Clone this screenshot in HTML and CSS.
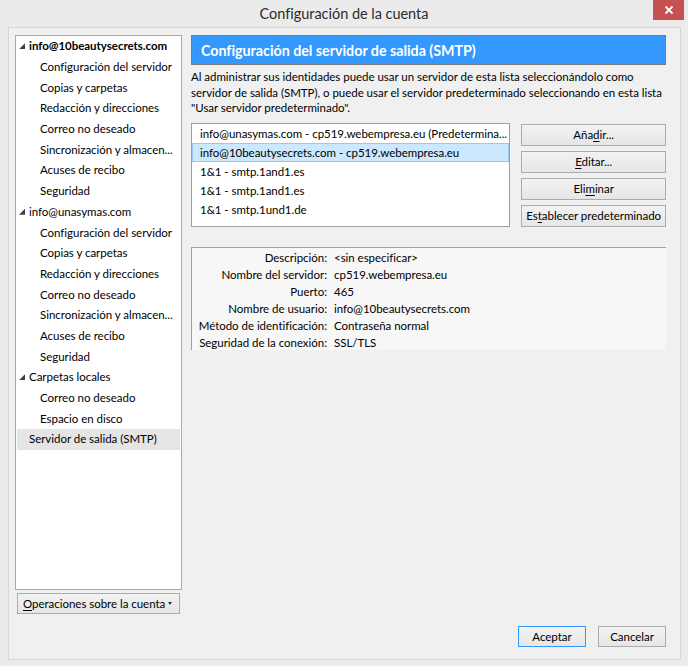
FILE: index.html
```html
<!DOCTYPE html>
<html lang="es">
<head>
<meta charset="utf-8">
<title>Configuración de la cuenta</title>
<link rel="stylesheet" href="styles.css">
</head>
<body>
<div class="window">
  <div class="titlebar">
    <span class="title">Configuración de la cuenta</span>
    <div class="close"><svg width="10" height="10" viewBox="0 0 10 10"><path d="M1.5 1.5 L8.5 8.5 M8.5 1.5 L1.5 8.5" stroke="#fff" stroke-width="1.8" fill="none"/></svg></div>
  </div>
  <div class="client">
    <div class="main">
      <div class="leftcol">
        <div class="tree">
          <div class="node top bold"><span class="twisty"></span>info@10beautysecrets.com</div>
          <div class="node child">Configuración del servidor</div>
          <div class="node child">Copias y carpetas</div>
          <div class="node child">Redacción y direcciones</div>
          <div class="node child">Correo no deseado</div>
          <div class="node child">Sincronización y almacen...</div>
          <div class="node child">Acuses de recibo</div>
          <div class="node child">Seguridad</div>
          <div class="node top"><span class="twisty"></span>info@unasymas.com</div>
          <div class="node child">Configuración del servidor</div>
          <div class="node child">Copias y carpetas</div>
          <div class="node child">Redacción y direcciones</div>
          <div class="node child">Correo no deseado</div>
          <div class="node child">Sincronización y almacen...</div>
          <div class="node child">Acuses de recibo</div>
          <div class="node child">Seguridad</div>
          <div class="node top"><span class="twisty"></span>Carpetas locales</div>
          <div class="node child">Correo no deseado</div>
          <div class="node child">Espacio en disco</div>
          <div class="node top selected">Servidor de salida (SMTP)</div>
        </div>
        <button class="btn ops"><span class="opslabel"><u>O</u>peraciones sobre la cuenta</span><span class="caret"></span></button>
      </div>
      <div class="rightcol">
        <div class="header">Configuración del servidor de salida (SMTP)</div>
        <p class="desc">Al administrar sus identidades puede usar un servidor de esta lista seleccionándolo como servidor de salida (SMTP), o puede usar el servidor predeterminado seleccionando en esta lista "Usar servidor predeterminado".</p>
        <div class="listrow">
          <div class="list">
            <div class="item">info@unasymas.com - cp519.webempresa.eu (Predetermina...</div>
            <div class="item sel">info@10beautysecrets.com - cp519.webempresa.eu</div>
            <div class="item">1&amp;1 - smtp.1and1.es</div>
            <div class="item">1&amp;1 - smtp.1and1.es</div>
            <div class="item">1&amp;1 - smtp.1und1.de</div>
          </div>
          <div class="actions">
            <button class="btn">Aña<u>d</u>ir...</button>
            <button class="btn"><u>E</u>ditar...</button>
            <button class="btn">Eli<u>m</u>inar</button>
            <button class="btn">Es<u>t</u>ablecer predeterminado</button>
          </div>
        </div>
        <div class="details">
          <span class="lbl">Descripción:</span><span class="val">&lt;sin especificar&gt;</span>
          <span class="lbl">Nombre del servidor:</span><span class="val">cp519.webempresa.eu</span>
          <span class="lbl">Puerto:</span><span class="val">465</span>
          <span class="lbl">Nombre de usuario:</span><span class="val">info@10beautysecrets.com</span>
          <span class="lbl">Método de identificación:</span><span class="val">Contraseña normal</span>
          <span class="lbl">Seguridad de la conexión:</span><span class="val">SSL/TLS</span>
        </div>
      </div>
    </div>
    <div class="footer">
      <button class="btn dlg default">Aceptar</button>
      <button class="btn dlg">Cancelar</button>
    </div>
  </div>
</div>
</body>
</html>
```
FILE: styles.css
```css
* { box-sizing: border-box; }
html, body { margin: 0; padding: 0; }
body {
  width: 688px;
  height: 666px;
  overflow: hidden;
  font-family: "Lato", "Liberation Sans", sans-serif;
  font-size: 11.5px;
  letter-spacing: -0.03px;
  color: #000;
  background: #ebebeb;
}
.window {
  width: 688px;
  height: 666px;
  display: flex;
  flex-direction: column;
  background: #ebebeb;
}
.titlebar {
  position: relative;
  height: 27px;
  display: flex;
  align-items: center;
  justify-content: center;
  padding-bottom: 1px;
}
.title {
  font-size: 14.5px;
  color: #2b2b2b;
}
.close {
  position: absolute;
  top: 0;
  right: 4px;
  width: 31px;
  height: 20px;
  background: #c75050;
  display: flex;
  align-items: center;
  justify-content: center;
}
.client {
  flex: 1;
  margin: 0 7px 6px 8px;
  border: 1px solid #d6d6d6;
  background: #f0f0f0;
  padding: 7px 14px 12px 6px;
  display: flex;
  flex-direction: column;
}
.main {
  flex: 1;
  display: flex;
  gap: 9px;
}
.leftcol {
  width: 167px;
  display: flex;
  flex-direction: column;
}
.tree {
  height: 555px;
  background: #fff;
  border: 1px solid #a5a9b1;
  padding: 0;
}
.node {
  height: 20.7px;
  line-height: 20px;
  white-space: nowrap;
  overflow: hidden;
  display: flex;
  align-items: center;
}
.node.top { padding-left: 3px; }
.node.child { padding-left: 24px; }
.node.bold { font-weight: bold; }
.node.selected { background: #e5e5e5; margin: 0 1px; padding-left: 12px; }
.twisty {
  width: 6px;
  height: 6px;
  margin-right: 4px;
  background: #404040;
  clip-path: polygon(100% 0, 100% 100%, 0 100%);
  flex: none;
}
.btn {
  font-family: inherit;
  font-size: 11.5px;
  letter-spacing: inherit;
  color: #000;
  background: linear-gradient(#f2f2f2, #e6e6e6);
  border: 1px solid #acacac;
  border-radius: 0;
  padding: 0;
  height: 22px;
  white-space: nowrap;
  cursor: default;
}
.btn u { text-decoration-thickness: 1px; text-underline-offset: 2px; }
.ops {
  margin-top: 3px;
  margin-left: 2px;
  width: 163px;
  height: 21px;
  display: flex;
  align-items: center;
  justify-content: space-between;
  padding: 0 7px 0 5px;
}
.opslabel { white-space: nowrap; }
.caret {
  width: 0;
  height: 0;
  border-left: 2.5px solid transparent;
  border-right: 2.5px solid transparent;
  border-top: 3px solid #333;
}
.rightcol {
  width: 475px;
  display: flex;
  flex-direction: column;
}
.header {
  height: 30px;
  background: #3399ff;
  border: 1px solid #7a7a7a;
  color: #fff;
  font-weight: bold;
  font-size: 14.3px;
  display: flex;
  align-items: center;
  padding-left: 9px;
}
.desc {
  margin: 4px 0 0 0;
  line-height: 15.5px;
}
.listrow {
  display: flex;
  gap: 11px;
  margin-top: 7px;
}
.list {
  width: 320px;
  height: 104px;
  background: #fff;
  border: 1px solid #9a9ea6;
  padding: 0;
}
.item {
  height: 19px;
  line-height: 18px;
  padding-left: 7px;
  white-space: nowrap;
  overflow: hidden;
  border: 1px solid transparent;
}
.item.sel {
  background: #cce8ff;
  border-color: #99c9f0;
}
.actions {
  width: 145px;
  display: flex;
  flex-direction: column;
  gap: 5px;
  padding-top: 1px;
}
.details {
  margin-top: 20px;
  height: 103px;
  background: #f7f7f7;
  border-top: 1px solid #a0a0a0;
  border-left: 1px solid #a0a0a0;
  display: grid;
  grid-template-columns: 135px 1fr;
  column-gap: 7px;
  grid-auto-rows: 17px;
  align-items: center;
  padding-top: 1px;
}
.lbl { text-align: right; white-space: nowrap; }
.val { white-space: nowrap; }
.footer {
  display: flex;
  justify-content: flex-end;
  gap: 12px;
  margin-top: 12px;
}
.dlg {
  width: 68px;
  height: 21px;
}
.dlg.default {
  border-color: #3399ff;
}
```
